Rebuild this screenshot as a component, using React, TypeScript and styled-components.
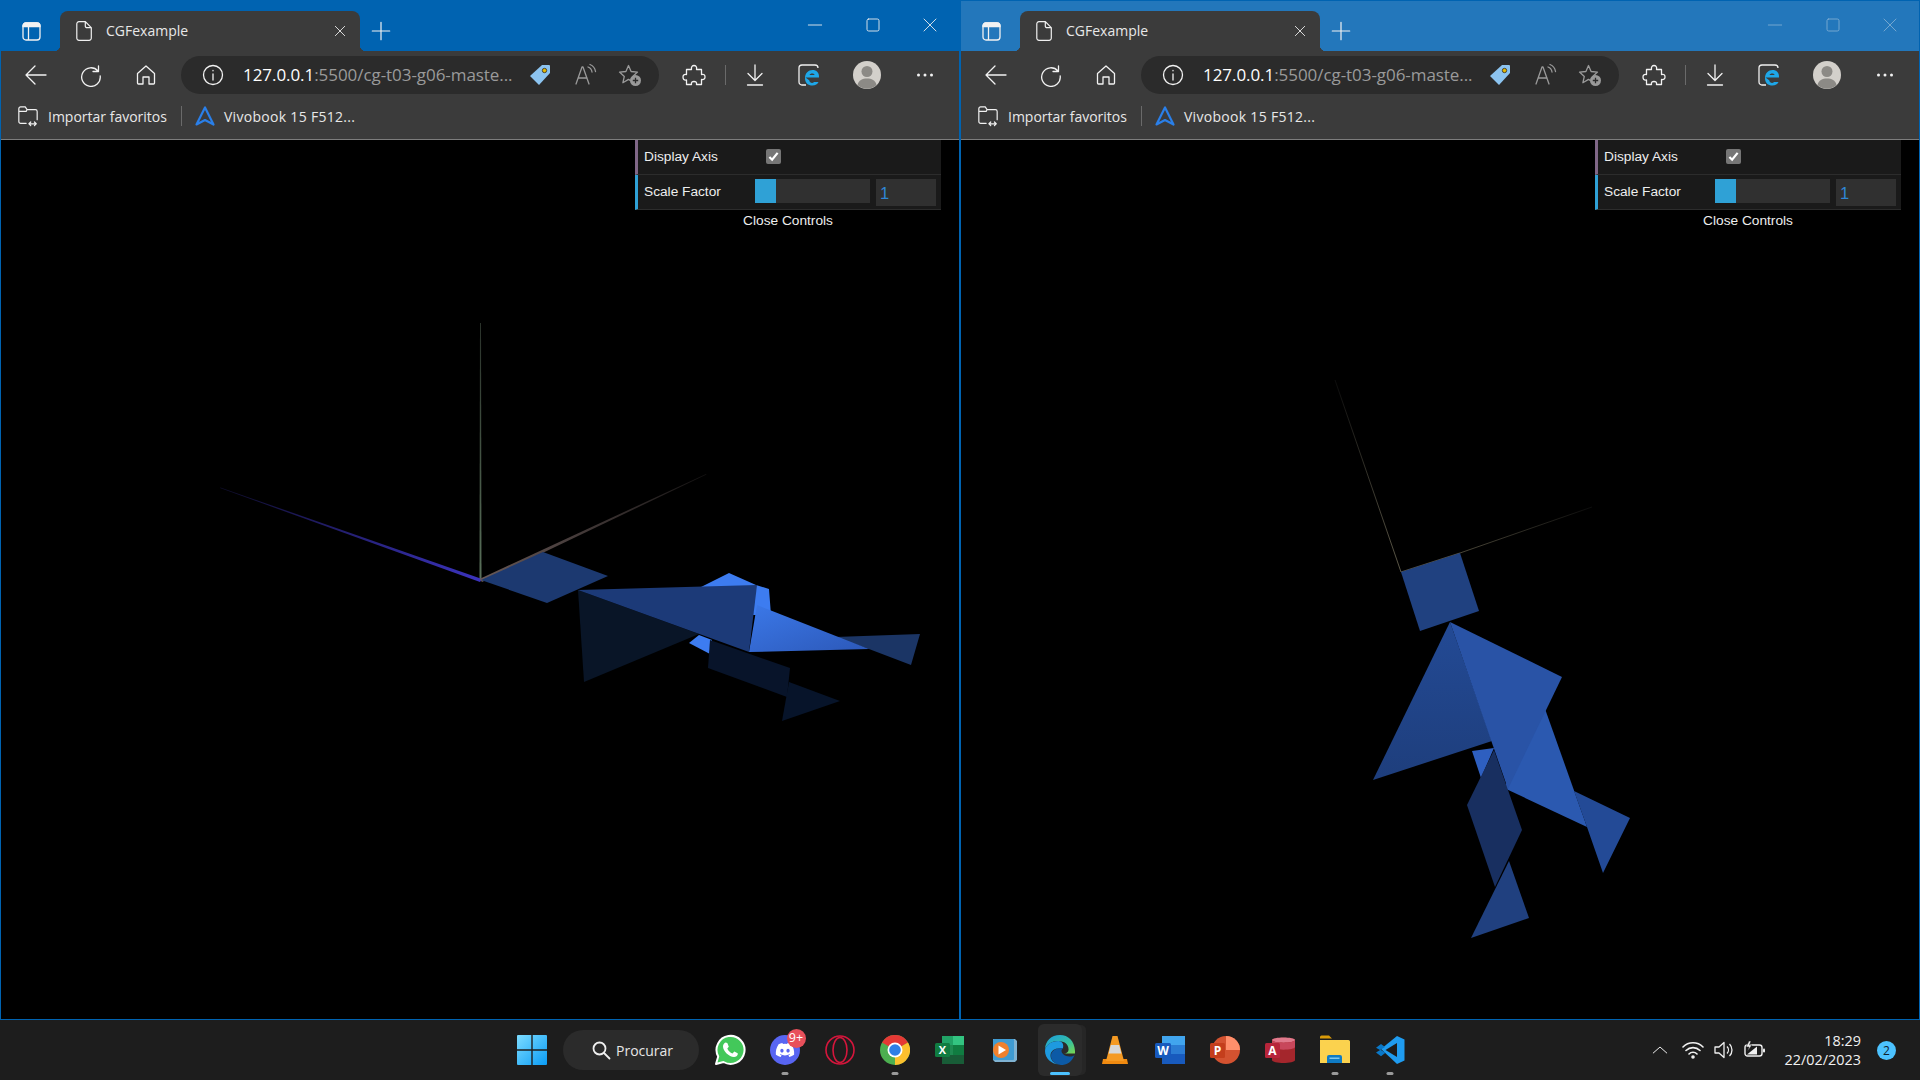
import React from "react";
import styled, { createGlobalStyle } from "styled-components";
import { FaDiscord } from "react-icons/fa";

const GlobalStyle = createGlobalStyle`
  html, body { margin: 0; padding: 0; background: #000; overflow: hidden; }
  * { box-sizing: border-box; }
`;

const UI_FONT = `"Open Sans", "Noto Sans", sans-serif`;

const Screen = styled.div`
  width: 1920px;
  height: 1080px;
  display: flex;
  flex-direction: column;
  font-family: ${UI_FONT};
`;

const Windows = styled.div`
  display: flex;
  height: 1020px;
`;

const BrowserWindow = styled.section`
  width: 960px;
  height: 1020px;
  display: flex;
  flex-direction: column;
  border: 1px solid #0063b1;
  background: #000;
`;

const TitleBar = styled.div<{ $inactive?: boolean }>`
  height: 50px;
  flex: none;
  display: flex;
  align-items: flex-end;
  padding-left: 17px;
  background: ${(p) => (p.$inactive ? "#2377bb" : "#0063b1")};
`;

const TabActions = styled.div`
  width: 26px;
  height: 40px;
  display: flex;
  align-items: center;
  justify-content: center;
  margin-right: 16px;
`;

const Tab = styled.div`
  width: 300px;
  height: 40px;
  display: flex;
  align-items: center;
  padding-left: 16px;
  background: #3b3b3b;
  border-radius: 8px 8px 0 0;
  position: relative;
  &::before, &::after {
    content: "";
    position: absolute;
    bottom: 0;
    width: 6px;
    height: 6px;
  }
  &::before { left: -6px; background: radial-gradient(circle at 0 0, transparent 6px, #3b3b3b 6.5px); }
  &::after { right: -6px; background: radial-gradient(circle at 100% 0, transparent 6px, #3b3b3b 6.5px); }
`;

const TabTitle = styled.span`
  flex: 1;
  margin: 0 0 2px 14px;
  font-size: 14px;
  letter-spacing: 0;
  color: #e8e8e8;
`;

const TabClose = styled.span`
  width: 20px;
  height: 20px;
  margin-right: 10px;
  display: flex;
  align-items: center;
  justify-content: center;
`;

const NewTab = styled.div`
  width: 24px;
  height: 40px;
  margin-left: 9px;
  display: flex;
  align-items: center;
  justify-content: center;
`;

const WindowControls = styled.div<{ $inactive?: boolean }>`
  margin-left: auto;
  align-self: flex-start;
  height: 50px;
  display: flex;
  opacity: ${(p) => (p.$inactive ? 0.45 : 1)};
`;

const WindowControl = styled.div`
  width: 57.5px;
  height: 48px;
  display: flex;
  align-items: center;
  justify-content: center;
`;

const Toolbar = styled.div`
  height: 47px;
  flex: none;
  display: flex;
  align-items: center;
  padding-left: 7.5px;
  background: #3b3b3b;
`;

const Slot = styled.div<{ $w: number; $ml?: number }>`
  width: ${(p) => p.$w}px;
  margin-left: ${(p) => p.$ml ?? 0}px;
  flex: none;
  display: flex;
  align-items: center;
  justify-content: center;
`;

const AddressPill = styled.div`
  width: 478px;
  height: 38px;
  margin-left: 7.5px;
  flex: none;
  display: flex;
  align-items: center;
  padding-left: 20px;
  border-radius: 19px;
  background: #2b2b2b;
`;

const Url = styled.div`
  width: 274.5px;
  margin-left: 18px;
  flex: none;
  font-size: 17px;
  letter-spacing: -0.06px;
  white-space: nowrap;
  overflow: hidden;
  color: #fff;
`;

const UrlRest = styled.span`
  color: #9a9a9a;
`;

const ToolDivider = styled.div<{ $ml: number }>`
  width: 1px;
  height: 20px;
  margin-left: ${(p) => p.$ml}px;
  background: #6a6a6a;
  flex: none;
`;

const Favorites = styled.div`
  height: 42px;
  flex: none;
  display: flex;
  align-items: center;
  padding: 0 0 5px 16px;
  background: #3b3b3b;
  border-bottom: 1px solid #7d7d7d;
  font-size: 14px;
  color: #e8e8e8;
`;

const FavText = styled.span<{ $ml: number; $sp?: number }>`
  margin-left: ${(p) => p.$ml}px;
  letter-spacing: ${(p) => p.$sp ?? 0}px;
  white-space: nowrap;
`;

const Viewport = styled.main`
  flex: 1;
  position: relative;
  overflow: hidden;
  background: #000;
`;

const SceneSvg = styled.svg`
  display: block;
  width: 958px;
  height: 879px;
`;

/* dat.GUI panel floating over the canvas */
const GuiPanel = styled.div`
  position: absolute;
  top: 0;
  left: 634px;
  width: 306px;
  font-family: "Liberation Sans", Arial, sans-serif;
  font-size: 13.7px;
  color: #eee;
`;

const GuiRow = styled.div<{ $accent: string }>`
  height: 35px;
  display: flex;
  align-items: center;
  padding-left: 6px;
  background: #1a1a1a;
  border-left: 3px solid ${(p) => p.$accent};
  border-bottom: 1px solid #2c2c2c;
`;

const GuiLabel = styled.span`
  width: 111px;
  margin-bottom: 2px;
  flex: none;
`;

const GuiCheck = styled.span`
  width: 15px;
  height: 15px;
  margin: 0 0 2px 11px;
  display: flex;
  align-items: center;
  justify-content: center;
  border-radius: 2px;
  background: #767676;
`;

const GuiSlider = styled.div`
  width: 115px;
  height: 24px;
  margin-bottom: 2px;
  flex: none;
  background: #303030;
`;

const GuiSliderFill = styled.div`
  height: 100%;
  background: #2fa1d6;
`;

const GuiNumber = styled.div`
  width: 60px;
  height: 27px;
  margin-left: 6px;
  padding: 4px 0 0 4px;
  flex: none;
  font-size: 16.5px;
  line-height: 20px;
  background: #303030;
  color: #2f86d6;
`;

const GuiClose = styled.div`
  height: 22px;
  line-height: 22px;
  text-align: center;
`;

const Taskbar = styled.footer`
  height: 60px;
  display: flex;
  align-items: center;
  padding-left: 517px;
  background: #1d1d1d;
  color: #fff;
`;

const StartButton = styled.div`
  width: 30px;
  height: 30px;
  flex: none;
`;

const SearchBox = styled.div`
  width: 136px;
  height: 40px;
  margin-left: 16px;
  margin-right: 3.5px;
  display: flex;
  align-items: center;
  gap: 5px;
  padding-left: 28px;
  flex: none;
  border-radius: 20px;
  background: #2b2b2b;
  font-size: 14px;
  color: #e6e6e6;
`;

const TaskSlot = styled.div<{ $active?: boolean }>`
  width: 55px;
  height: 52px;
  flex: none;
  position: relative;
  display: flex;
  align-items: center;
  justify-content: center;
  border-radius: 6px;
  ${(p) =>
    p.$active &&
    `
    background: #2b2b2b;
    box-shadow: 5px 0 0 -1px #262626;
    width: 44px;
    margin: 0 5.5px;
  `}
`;

const RunningDot = styled.span<{ $active?: boolean }>`
  position: absolute;
  bottom: 1px;
  left: 50%;
  transform: translateX(-50%);
  width: ${(p) => (p.$active ? 20 : 7)}px;
  height: 3px;
  border-radius: 2px;
  background: ${(p) => (p.$active ? "#4cc2ff" : "#9a9a9a")};
`;

const CountBadge = styled.span`
  position: absolute;
  top: 5px;
  left: 29px;
  width: 19px;
  height: 19px;
  border-radius: 50%;
  background: #e8505b;
  font-size: 12.5px;
  line-height: 17px;
  text-align: center;
  color: #fff;
`;

const Tray = styled.div`
  margin-left: auto;
  display: flex;
  align-items: center;
  height: 100%;
`;

const TrayIcon = styled.div<{ $w: number }>`
  width: ${(p) => p.$w}px;
  display: flex;
  justify-content: center;
  flex: none;
`;

const Clock = styled.div`
  width: 80px;
  margin-left: 8px;
  text-align: right;
  font-size: 14.4px;
  line-height: 19px;
  white-space: nowrap;
  color: #f0f0f0;
`;

const NotifyBadge = styled.div`
  width: 19px;
  height: 19px;
  margin: 0 24px 0 16px;
  border-radius: 50%;
  background: #4cc2ff;
  font-size: 12px;
  line-height: 19px;
  text-align: center;
  color: #10202c;
`;

type Poly = { points: string; fill: string };

const leftScene: Poly[] = [
  { points: "481,580 543,552 608,576 547,603", fill: "#1c3970" },
  { points: "699,588 729,573 756,585 769,589 771,615 750,615", fill: "#3d7cf0" },
  { points: "689,643 699,635 712,640 710,654", fill: "#3d7cf0" },
  { points: "578,590 699,634 584,682", fill: "#091527" },
  { points: "710,640 790,668 787,697 708,668", fill: "#08142a" },
  { points: "789,682 840,701 782,721", fill: "#07142a" },
  { points: "835,637 920,634 911,665 869,649", fill: "#1b3565" },
  { points: "757,605 869,649 749,652", fill: "url(#leftBright)" },
  { points: "578,590 757,585 749,652", fill: "#1c3a78" },
];

const rightScene: Poly[] = [
  { points: "1401,572 1460,553 1479,611 1420,631", fill: "#204180" },
  { points: "1472,751 1494,748 1481,778", fill: "#2e5fc0" },
  { points: "1450,622 1373,780 1492,741", fill: "url(#rightBody)" },
  { points: "1544,706 1587,827 1504,788", fill: "#2b59b0" },
  { points: "1574,791 1630,818 1603,873 1587,827", fill: "#234a96" },
  { points: "1450,622 1562,677 1508,789", fill: "#2953a6" },
  { points: "1509,861 1529,918 1471,938", fill: "#20407f" },
  { points: "1494,750 1522,830 1495,887 1467,805", fill: "#182f60" },
];

const Scene = ({ box, polys, axes }: { box: string; polys: Poly[]; axes: React.ReactNode }) => (
  <SceneSvg viewBox={box}>
    <defs>
      <linearGradient id="leftBright" x1="0" y1="0" x2="1" y2="1">
        <stop offset="0" stopColor="#3b78e8" />
        <stop offset="1" stopColor="#2c58b8" />
      </linearGradient>
      <linearGradient id="rightBody" x1="0" y1="0" x2="0" y2="1">
        <stop offset="0" stopColor="#234a95" />
        <stop offset="1" stopColor="#1e3e7c" />
      </linearGradient>
      <linearGradient id="axisBlue" x1="1" y1="1" x2="0" y2="0">
        <stop offset="0" stopColor="#3c34c0" />
        <stop offset="1" stopColor="#0e0c2a" />
      </linearGradient>
      <linearGradient id="axisGreen" x1="0" y1="1" x2="0" y2="0">
        <stop offset="0" stopColor="#59705a" />
        <stop offset="1" stopColor="#2a322a" />
      </linearGradient>
      <linearGradient id="axisRed" x1="0" y1="1" x2="1" y2="0">
        <stop offset="0" stopColor="#6a5a58" />
        <stop offset="1" stopColor="#141212" />
      </linearGradient>
      <linearGradient id="axisFadeUp" gradientUnits="userSpaceOnUse" x1="1401" y1="572" x2="1335" y2="380">
        <stop offset="0" stopColor="#5c5848" />
        <stop offset="1" stopColor="#0c0c0c" />
      </linearGradient>
      <linearGradient id="axisFadeRight" gradientUnits="userSpaceOnUse" x1="1460" y1="553" x2="1592" y2="507">
        <stop offset="0" stopColor="#4a4638" />
        <stop offset="1" stopColor="#0c0c0c" />
      </linearGradient>
    </defs>
    {axes}
    {polys.map((p) => (
      <polygon key={p.points} points={p.points} fill={p.fill} />
    ))}
  </SceneSvg>
);

const leftAxes = (
  <>
    <polygon points="480,323 481,323 481.5,580 479.5,580" fill="url(#axisGreen)" />
    <polygon points="220,488 220.5,487.5 482,579 480,582" fill="url(#axisBlue)" />
    <polygon points="706,474 706.5,474.5 482,582 479.5,579" fill="url(#axisRed)" />
  </>
);

const rightAxes = (
  <>
    <line x1="1335" y1="380" x2="1401" y2="572" stroke="url(#axisFadeUp)" strokeWidth="1" />
    <line x1="1592" y1="507" x2="1460" y2="553" stroke="url(#axisFadeRight)" strokeWidth="1" />
    <line x1="1401" y1="572" x2="1460" y2="553" stroke="#5a5440" strokeWidth="1.2" />
  </>
);

const line = { fill: "none", stroke: "currentColor", strokeWidth: 1.3, strokeLinecap: "round", strokeLinejoin: "round" } as const;

const Outline = ({ size = 24, color = "#f2f2f2", children }: { size?: number; color?: string; children: React.ReactNode }) => (
  <svg width={size} height={size} viewBox="0 0 24 24" style={{ color }} {...line}>
    {children}
  </svg>
);

const BrowserChrome = ({ inactive }: { inactive?: boolean }) => (
  <>
    <TitleBar $inactive={inactive}>
      <TabActions>
        <svg width="19" height="19" viewBox="0 0 19 19" fill="none" stroke="#f2f2f2" strokeWidth="1.300">
          <rect x="1" y="1" width="17" height="17" rx="3" />
          <path d="M1 4.500a3 3 0 0 1 3-3.500h11a3 3 0 0 1 3 3.500z" fill="#f2f2f2" />
          <path d="M6.500 5v13" />
        </svg>
      </TabActions>
      <Tab>
        <svg width="16" height="20" viewBox="0 0 16 20" fill="none" stroke="#f0f0f0" strokeWidth="1.200">
          <path d="M3 .7h6.300l6 6V17a2.200 2.200 0 0 1-2.200 2.300H3A2.200 2.200 0 0 1 .8 17V3A2.200 2.200 0 0 1 3 .7zM9.300 .7V5a1.700 1.700 0 0 0 1.700 1.700h4.300" />
        </svg>
        <TabTitle>CGFexample</TabTitle>
        <TabClose>
          <Outline size={16}>
            <path d="M5 5l14 14M19 5L5 19" />
          </Outline>
        </TabClose>
      </Tab>
      <NewTab>
        <Outline size={22}>
          <path d="M12 2.500v19M2.500 12h19" />
        </Outline>
      </NewTab>
      <WindowControls $inactive={inactive}>
        <WindowControl>
          <Outline size={16}>
            <path d="M2 12h20" />
          </Outline>
        </WindowControl>
        <WindowControl>
          <Outline size={16}>
            <rect x="3" y="3" width="18" height="18" rx="2.500" />
          </Outline>
        </WindowControl>
        <WindowControl>
          <Outline size={16}>
            <path d="M3 3l18 18M21 3L3 21" />
          </Outline>
        </WindowControl>
      </WindowControls>
    </TitleBar>
    <Toolbar>
      <Slot $w={55}>
        <Outline>
          <path d="M22 12H2M11 3l-9 9 9 9" />
        </Outline>
      </Slot>
      <Slot $w={55}>
        <Outline>
          <path d="M19.500 3v5.500H14M19 8a9.300 9.300 0 1 0 2.200 5" />
        </Outline>
      </Slot>
      <Slot $w={55}>
        <Outline>
          <path d="M3.500 10.500L12 3l8.500 7.500V20a1 1 0 0 1-1 1H15v-7H9v7H4.500a1 1 0 0 1-1-1z" />
        </Outline>
      </Slot>
      <AddressPill>
        <Slot $w={24}>
          <Outline>
            <circle cx="12" cy="12" r="9.500" />
            <path d="M12 11v6M12 7.500v.3" />
          </Outline>
        </Slot>
        <Url>
          127.0.0.1<UrlRest>:5500/cg-t03-g06-maste...</UrlRest>
        </Url>
        <Slot $w={45}>
          <svg width="22" height="22" viewBox="0 0 22 22">
            <path d="M13 1h7a1 1 0 0 1 1 1v7L10 21 1 12z" fill="#8cc4f0" />
            <circle cx="15.500" cy="6.500" r="2.200" fill="#e6b800" stroke="#2b2b2b" strokeWidth="0.800" />
          </svg>
        </Slot>
        <Slot $w={45}>
          <Outline color="#9a9a9a">
            <path d="M3 21l6-17h1l6 17M5.500 15h8.500M15 4a6 6 0 0 1 4 5M17 1.500a9 9 0 0 1 5.500 7" />
          </Outline>
        </Slot>
        <Slot $w={45}>
          <svg width="24" height="24" viewBox="0 0 24 24">
            <path d="M10.500 2.500l2.600 6 6.400.6-4.800 4.300 1.400 6.300-5.600-3.300-5.600 3.300 1.400-6.300L1.500 9.100l6.400-.6z" fill="none" stroke="#9a9a9a" strokeWidth="1.300" strokeLinejoin="round" />
            <circle cx="17.500" cy="17.500" r="5.500" fill="#9a9a9a" />
            <path d="M17.500 14.800v5.400M14.800 17.500h5.400" stroke="#2b2b2b" strokeWidth="1.300" />
          </svg>
        </Slot>
      </AddressPill>
      <Slot $w={36} $ml={17}>
        <Outline>
          <path d="M9.500 6.500C9 3.500 10.500 2.500 12 2.500s3.200 1 2.500 4h5v5c3-.7 3.500 1 3.500 2.500s-1 3.200-3.500 2.500v5h-5c.5-2.500-1-3-2.500-3s-3 .5-2.500 3h-5v-4.500C1.500 17.500 1 15.500 1 14s.8-3 3.500-2.500v-5z" />
        </Outline>
      </Slot>
      <ToolDivider $ml={13} />
      <Slot $w={40} $ml={9}>
        <Outline>
          <path d="M12 2v15M5 10.500l7 7 7-7M4.500 22h15" />
        </Outline>
      </Slot>
      <Slot $w={54} $ml={7}>
        <svg width="22" height="22" viewBox="0 0 22 22">
          <path d="M8 21H4a3 3 0 0 1-3-3V4a3 3 0 0 1 3-3h13a3 3 0 0 1 3 3" fill="none" stroke="#f0f0f0" strokeWidth="1.300" />
          <path d="M7.500 13.500h13.500c.4-5-2.500-7.500-6.500-7.500s-7.500 3-7.500 8 3 7.500 7.500 7.500c3 0 5-1.200 6-3.500h-4.500c-1 1.500-4.500 1.200-4.700-1.500h.2zM11.500 11c.3-2 4.800-2.300 5.200 0z" fill="#1ea7e8" fillRule="evenodd" />
        </svg>
      </Slot>
      <Slot $w={62}>
        <svg width="28" height="28" viewBox="0 0 28 28">
          <circle cx="14" cy="14" r="14" fill="#d3d0cb" />
          <circle cx="14" cy="10.500" r="5.500" fill="#8c8a86" />
          <path d="M4.500 24c1-5 5-6.500 9.500-6.500s8.500 1.500 9.500 6.500a14 14 0 0 1-19 0z" fill="#8c8a86" />
        </svg>
      </Slot>
      <Slot $w={54}>
        <svg width="18" height="6" viewBox="0 0 18 6" fill="#f2f2f2">
          <circle cx="2.500" cy="3" r="1.500" />
          <circle cx="9" cy="3" r="1.500" />
          <circle cx="15.500" cy="3" r="1.500" />
        </svg>
      </Slot>
    </Toolbar>
    <Favorites>
      <Outline size={22}>
        <path d="M10 20H4a2 2 0 0 1-2-2V4a2 2 0 0 1 2-2h5l2 3h9a2 2 0 0 1 2 2v9M2 7h8l1-2M13 20.500h8M13 20.500l2-2M13 20.500l2 2M21 20.500l-2-2M21 20.500l-2 2" />
      </Outline>
      <FavText $ml={9}>Importar favoritos</FavText>
      <ToolDivider $ml={14} />
      <Slot $w={20} $ml={13}>
        <svg width="20" height="20" viewBox="0 0 20 20" fill="none" stroke="#2a7fe8" strokeWidth="2.200" strokeLinejoin="round">
          <path d="M10 1.500L1.500 18.500 10 14l8.500 4.500z" />
        </svg>
      </Slot>
      <FavText $ml={9} $sp={0.3}>Vivobook 15 F512...</FavText>
    </Favorites>
  </>
);

const GuiControls = () => (
  <GuiPanel>
    <GuiRow $accent="#806787">
      <GuiLabel>Display Axis</GuiLabel>
      <GuiCheck>
        <svg width="11" height="11" viewBox="0 0 12 12" fill="none" stroke="#fff" strokeWidth="2.400">
          <path d="M1.500 6.500l3 3 6-7.500" />
        </svg>
      </GuiCheck>
    </GuiRow>
    <GuiRow $accent="#2fa1d6">
      <GuiLabel>Scale Factor</GuiLabel>
      <GuiSlider>
        <GuiSliderFill style={{ width: `${(1 / 5.5) * 100}%` }} />
      </GuiSlider>
      <GuiNumber>1</GuiNumber>
    </GuiRow>
    <GuiClose>Close Controls</GuiClose>
  </GuiPanel>
);

const taskIcons: { key: string; dot?: boolean; active?: boolean; badge?: string; icon: React.ReactNode }[] = [
  {
    key: "whatsapp",
    icon: (
      <svg width="32" height="32" viewBox="0 0 32 32">
        <path d="M2 30l2.200-7.500A14 14 0 1 1 9.500 28z" fill="#43c85a" stroke="#fff" strokeWidth="2" strokeLinejoin="round" />
        <path d="M11.500 8.500c-1.200.5-2.500 2-2.500 4 0 4.500 6 10.500 11 10.500 2 0 3.500-1.300 3.800-2.800l-.1-1-3.400-1.700-1.800 2c-2.300-.8-4.200-2.700-5.200-5l1.500-1.800-1.500-3.700z" fill="#fff" />
      </svg>
    ),
  },
  {
    key: "discord",
    dot: true,
    badge: "9+",
    icon: (
      <svg width="30" height="30" viewBox="0 0 30 30">
        <circle cx="15" cy="15" r="15" fill="#5865f2" />
        <FaDiscord x="5" y="5" size={20} color="#fff" />
      </svg>
    ),
  },
  {
    key: "opera",
    icon: (
      <svg width="30" height="30" viewBox="0 0 30 30" fill="none" stroke="#d5163c" strokeWidth="1.600">
        <circle cx="15" cy="15" r="14" />
        <ellipse cx="15" cy="15" rx="7" ry="12.500" />
      </svg>
    ),
  },
  {
    key: "chrome",
    dot: true,
    icon: (
      <svg width="30" height="30" viewBox="0 0 30 30">
        <circle cx="15" cy="15" r="15" fill="#4caf50" />
        <path d="M15 15L2 7.500A15 15 0 0 1 28 7.500z" fill="#e53935" />
        <path d="M15 15l13-7.500A15 15 0 0 1 15 30z" fill="#fbc02d" />
        <circle cx="15" cy="15" r="7.500" fill="#fff" />
        <circle cx="15" cy="15" r="5.800" fill="#2f7fe6" />
      </svg>
    ),
  },
  {
    key: "excel",
    icon: (
      <svg width="30" height="30" viewBox="0 0 30 30">
        <rect x="7" y="1" width="22" height="28" rx="1.500" fill="#1f8a52" />
        <rect x="18" y="1" width="11" height="9" fill="#33c481" />
        <rect x="18" y="10" width="11" height="10" fill="#107c41" />
        <rect x="7" y="1" width="11" height="9" fill="#21a366" />
        <rect x="7" y="20" width="22" height="9" fill="#185c37" />
        <rect x="0" y="8" width="15" height="14" rx="1.500" fill="#107c41" />
        <text x="7.500" y="19" textAnchor="middle" fontSize="11" fontWeight="700" fill="#fff" fontFamily="'Open Sans', sans-serif">X</text>
      </svg>
    ),
  },
  {
    key: "media",
    icon: (
      <svg width="26" height="26" viewBox="0 0 26 26">
        <path d="M1 2h22l2 2v19l-2 2H3l-2-2z" fill="#7fb2d2" />
        <rect x="1" y="2" width="21" height="21" rx="1" fill="#3f9bd2" />
        <circle cx="9" cy="13" r="8" fill="#f0812d" />
        <path d="M6.500 8.500l7.500 4.500-7.500 4.500z" fill="#fff" />
      </svg>
    ),
  },
  {
    key: "edge",
    active: true,
    icon: (
      <svg width="30" height="30" viewBox="0 0 30 30">
        <defs>
          <linearGradient id="edgeTop" x1="0" y1="0" x2="1" y2="1">
            <stop offset="0" stopColor="#1b9de2" />
            <stop offset="0.6" stopColor="#35c0a0" />
            <stop offset="1" stopColor="#7bd84e" />
          </linearGradient>
        </defs>
        <path d="M15 0C6 0 .5 6 0 14c2-5 7-8 13-8 7 0 11 4 10.500 9-.2 2-2 3.500-4.500 3.500H30C30.500 7 24 0 15 0z" fill="url(#edgeTop)" />
        <path d="M30 18c0 3-3 3.500-5.500 3.500-4.500 0-8-3-8-5.500 0-1 .5-2 2-3-8-.5-12.500 3-12.500 8 0 4 3.500 8 10 9 7 .5 12.500-5 14-12z" fill="#0c5aa6" />
        <path d="M13.500 6C6.500 6 0 10 0 16c0 7 6 13 14 13.500-5.500-1-8.500-5-8.500-9 0-5 4.500-8 12.500-7.500C19 9 17 6 13.500 6z" fill="#1e9ae0" />
      </svg>
    ),
  },
  {
    key: "vlc",
    icon: (
      <svg width="26" height="30" viewBox="0 0 26 30">
        <path d="M1 24h24l1 5H0z" fill="#f08a10" />
        <path d="M10.500 1h5L22 26H4z" fill="#f59a23" />
        <path d="M8.800 10h8.400l2.200 8.500H6.600z" fill="#d8d8d8" />
      </svg>
    ),
  },
  {
    key: "word",
    icon: (
      <svg width="30" height="30" viewBox="0 0 30 30">
        <rect x="7" y="1" width="23" height="28" rx="1.500" fill="#2b7cd3" />
        <rect x="7" y="1" width="23" height="9" fill="#41a5ee" />
        <rect x="7" y="19" width="23" height="10" fill="#185abd" />
        <rect x="0" y="8" width="16" height="15" rx="1.500" fill="#185abd" />
        <text x="8" y="20" textAnchor="middle" fontSize="12" fontWeight="700" fill="#fff" fontFamily="'Open Sans', sans-serif">W</text>
      </svg>
    ),
  },
  {
    key: "ppt",
    icon: (
      <svg width="30" height="30" viewBox="0 0 30 30">
        <circle cx="16" cy="15" r="14" fill="#d35230" />
        <path d="M16 1a14 14 0 0 1 14 14H16z" fill="#ff8f6b" />
        <rect x="0" y="8" width="15" height="15" rx="1.500" fill="#c43e1c" />
        <text x="7.500" y="20" textAnchor="middle" fontSize="12" fontWeight="700" fill="#fff" fontFamily="'Open Sans', sans-serif">P</text>
      </svg>
    ),
  },
  {
    key: "access",
    icon: (
      <svg width="30" height="30" viewBox="0 0 30 30">
        <path d="M7 5c0-3 23-3 23 0v20c0 4-23 4-23 0z" fill="#a4262c" />
        <path d="M7 5c0 3.500 23 3.500 23 0s-23-3.500-23 0z" fill="#e07a8c" />
        <path d="M7 5c0 3.500 23 3.500 23 0v7c0 3.500-23 3.500-23 0z" fill="#c8475b" />
        <rect x="0" y="8" width="15" height="15" rx="1.500" fill="#b7253a" />
        <text x="7.500" y="20" textAnchor="middle" fontSize="12" fontWeight="700" fill="#fff" fontFamily="'Open Sans', sans-serif">A</text>
      </svg>
    ),
  },
  {
    key: "explorer",
    dot: true,
    icon: (
      <svg width="32" height="30" viewBox="0 0 32 30">
        <path d="M1 2a1.500 1.500 0 0 1 1.500-1.500H10l3 3h-12z" fill="#d99a08" />
        <path d="M1 5h28.500a1.500 1.500 0 0 1 1.500 1.500V28H1z" fill="#fbd24e" />
        <path d="M10 20h11a2 2 0 0 1 2 2v6H8v-6a2 2 0 0 1 2-2z" fill="#0f7bc4" />
        <rect x="10.500" y="22.500" width="10" height="1.500" fill="#7fc8f0" />
      </svg>
    ),
  },
  {
    key: "vscode",
    dot: true,
    icon: (
      <svg width="30" height="30" viewBox="0 0 30 30">
        <path d="M22 1l7.500 3.500v21L22 29 6 14z" fill="#1f9cf0" />
        <path d="M22 8L10.500 15 22 22z" fill="#1d1d1d" />
        <path d="M6 9l-5 3.800 4 2.200 5-3zM1 17.500l5 3.800 4.500-3.500-5-3z" fill="#0a78c8" />
      </svg>
    ),
  },
];

const WindowsTaskbar = () => (
  <Taskbar>
    <StartButton>
      <svg width="30" height="30" viewBox="0 0 30 30">
        <defs>
          <linearGradient id="winLogo" x1="0" y1="0" x2="1" y2="1">
            <stop offset="0" stopColor="#7ddcff" />
            <stop offset="1" stopColor="#0a9cf5" />
          </linearGradient>
        </defs>
        <path d="M0 1a1 1 0 0 1 1-1h13.300v14.300H0zM15.700 0H29a1 1 0 0 1 1 1v13.300H15.700zM0 15.700h14.300V30H1a1 1 0 0 1-1-1zM15.700 15.700H30V29a1 1 0 0 1-1 1H15.700z" fill="url(#winLogo)" />
      </svg>
    </StartButton>
    <SearchBox>
      <svg width="20" height="20" viewBox="0 0 20 20" fill="none" stroke="#f0f0f0" strokeWidth="1.800" strokeLinecap="round">
        <circle cx="8.500" cy="8.500" r="6" />
        <path d="M13 13l5.500 5.500" />
      </svg>
      Procurar
    </SearchBox>
    {taskIcons.map((t) => (
      <TaskSlot key={t.key} $active={t.active}>
        {t.icon}
        {t.badge && <CountBadge>{t.badge}</CountBadge>}
        {(t.dot || t.active) && <RunningDot $active={t.active} />}
      </TaskSlot>
    ))}
    <Tray>
      <TrayIcon $w={30}>
        <Outline size={18}>
          <path d="M3 16l9-8 9 8" />
        </Outline>
      </TrayIcon>
      <TrayIcon $w={36}>
        <svg width="22" height="18" viewBox="0 0 22 18" fill="none" stroke="#f0f0f0" strokeWidth="1.600" strokeLinecap="round">
          <path d="M1 6a14 14 0 0 1 20 0M4 9.500a10 10 0 0 1 14 0M7 13a5.500 5.500 0 0 1 8 0" />
          <circle cx="11" cy="16" r="1" fill="#f0f0f0" />
        </svg>
      </TrayIcon>
      <TrayIcon $w={26}>
        <svg width="20" height="18" viewBox="0 0 20 18" fill="none" stroke="#f0f0f0" strokeWidth="1.300" strokeLinejoin="round">
          <path d="M1 6h4l5-4.500v15L5 12H1zM13 5.500a5 5 0 0 1 0 7M15.500 3a8.500 8.500 0 0 1 0 12" />
        </svg>
      </TrayIcon>
      <TrayIcon $w={36}>
        <svg width="22" height="18" viewBox="0 0 22 18">
          <rect x="1" y="4" width="17" height="11" rx="2.500" fill="none" stroke="#f0f0f0" strokeWidth="1.400" />
          <path d="M3 13.500L13 5.500v8z" fill="#f0f0f0" />
          <rect x="19" y="7.500" width="2" height="4" rx="1" fill="#f0f0f0" />
          <path d="M5 0L2 6h3L3.500 10 8 4H5.500L7 0z" fill="#f0f0f0" stroke="#1d1d1d" strokeWidth="0.500" />
        </svg>
      </TrayIcon>
      <Clock>
        18:29
        <br />
        22/02/2023
      </Clock>
      <NotifyBadge>2</NotifyBadge>
    </Tray>
  </Taskbar>
);

export default function App() {
  return (
    <Screen>
      <GlobalStyle />
      <Windows>
        <BrowserWindow>
          <BrowserChrome />
          <Viewport>
            <Scene box="1 140 958 879" polys={leftScene} axes={leftAxes} />
            <GuiControls />
          </Viewport>
        </BrowserWindow>
        <BrowserWindow>
          <BrowserChrome inactive />
          <Viewport>
            <Scene box="961 140 958 879" polys={rightScene} axes={rightAxes} />
            <GuiControls />
          </Viewport>
        </BrowserWindow>
      </Windows>
      <WindowsTaskbar />
    </Screen>
  );
}
